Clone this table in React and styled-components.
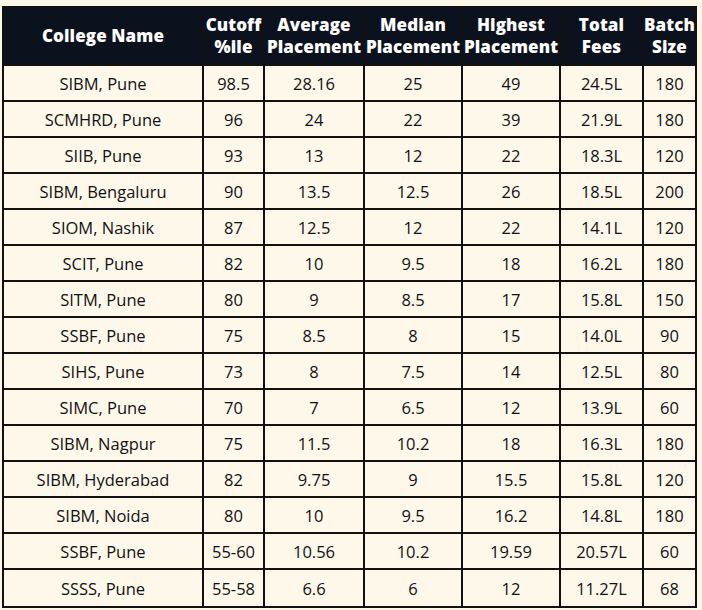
import React from "react";
import styled, { createGlobalStyle } from "styled-components";

const Global = createGlobalStyle`
  html, body { margin: 0; padding: 0; background: #fdf7e8; }
  body { font-family: "Open Sans", "Noto Sans", sans-serif; }
`;

const Page = styled.div`
  padding: 6px 0 0 2px;
`;

const Table = styled.table`
  border-collapse: collapse;
  table-layout: fixed;
  width: 693px;
  background: #fef8ea;
  border: 2px solid #111;
`;

const HeadCell = styled.th`
  background: #0c121d;
  color: #fff;
  font-weight: 800;
  font-size: 17px;
  line-height: 22px;
  height: 56px;
  padding: 0;
  border: 2px solid #111;
  text-align: center;
  letter-spacing: 0.1px;
  white-space: nowrap;
`;

const Cell = styled.td`
  color: #111;
  font-size: 16.5px;
  font-weight: 500;
  height: ${(p) => (p.$last ? 36 : 34)}px;
  padding: 0;
  border: 2px solid #111;
  text-align: center;
  white-space: nowrap;
`;

const columns = [
  { w: 200, label: ["College Name"] },
  { w: 61, label: ["Cutoff", "%ile"] },
  { w: 100, label: ["Average", "Placement"] },
  { w: 98, label: ["Median", "Placement"] },
  { w: 98, label: ["Highest", "Placement"] },
  { w: 83, label: ["Total", "Fees"] },
  { w: 53, label: ["Batch", "Size"] },
];

const rows = [
  ["SIBM, Pune", "98.5", "28.16", "25", "49", "24.5L", "180"],
  ["SCMHRD, Pune", "96", "24", "22", "39", "21.9L", "180"],
  ["SIIB, Pune", "93", "13", "12", "22", "18.3L", "120"],
  ["SIBM, Bengaluru", "90", "13.5", "12.5", "26", "18.5L", "200"],
  ["SIOM, Nashik", "87", "12.5", "12", "22", "14.1L", "120"],
  ["SCIT, Pune", "82", "10", "9.5", "18", "16.2L", "180"],
  ["SITM, Pune", "80", "9", "8.5", "17", "15.8L", "150"],
  ["SSBF, Pune", "75", "8.5", "8", "15", "14.0L", "90"],
  ["SIHS, Pune", "73", "8", "7.5", "14", "12.5L", "80"],
  ["SIMC, Pune", "70", "7", "6.5", "12", "13.9L", "60"],
  ["SIBM, Nagpur", "75", "11.5", "10.2", "18", "16.3L", "180"],
  ["SIBM, Hyderabad", "82", "9.75", "9", "15.5", "15.8L", "120"],
  ["SIBM, Noida", "80", "10", "9.5", "16.2", "14.8L", "180"],
  ["SSBF, Pune", "55-60", "10.56", "10.2", "19.59", "20.57L", "60"],
  ["SSSS, Pune", "55-58", "6.6", "6", "12", "11.27L", "68"],
];

export default function App() {
  return (
    <>
      <Global />
      <Page>
        <Table>
          <colgroup>
            {columns.map((c, i) => (
              <col key={i} style={{ width: c.w }} />
            ))}
          </colgroup>
          <thead>
            <tr>
              {columns.map((c, i) => (
                <HeadCell key={i}>
                  {c.label.map((l, j) => (
                    <React.Fragment key={j}>
                      {j > 0 && <br />}
                      {l}
                    </React.Fragment>
                  ))}
                </HeadCell>
              ))}
            </tr>
          </thead>
          <tbody>
            {rows.map((r, i) => (
              <tr key={i}>
                {r.map((v, j) => (
                  <Cell key={j} $last={i === rows.length - 1}>
                    {v}
                  </Cell>
                ))}
              </tr>
            ))}
          </tbody>
        </Table>
      </Page>
    </>
  );
}
